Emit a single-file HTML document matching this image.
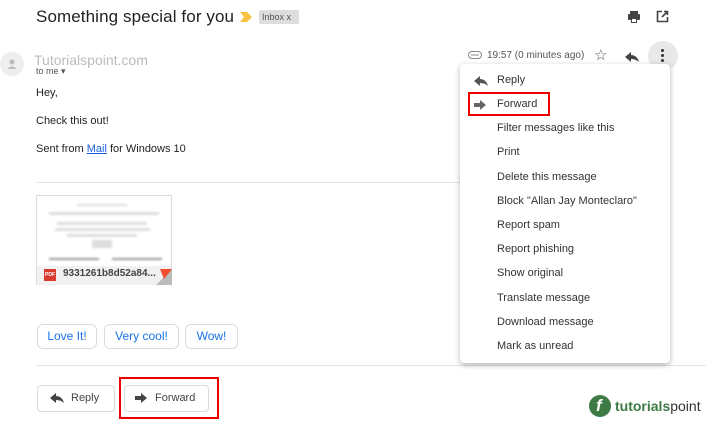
<!DOCTYPE html>
<html><head><style>
*{margin:0;padding:0;box-sizing:border-box}
body{width:720px;height:425px;background:#fff;font-family:"Liberation Sans",Arial,sans-serif;position:relative;overflow:hidden;color:#222}
.a{position:absolute}
.t{font-size:11px;color:#222}
.mi{position:absolute;left:497px;font-size:11px;color:#333}
.btn{position:absolute;border:1px solid #dadce0;border-radius:4px;background:#fff}
.qr{position:absolute;top:324px;height:25px;border:1px solid #dadce0;border-radius:6px;color:#1a73e8;font-size:12px;line-height:23px;text-align:center}
.blur{position:absolute;background:#ddd;filter:blur(1px);height:3px}
</style></head><body>
<div class="a" style="left:36px;top:7px;font-size:17px;color:#222;letter-spacing:0.1px">Something special for you</div>
<svg class="a" style="left:240px;top:12px" width="12" height="10"><path d="M0 0H7L12 5L7 10H0L4 5Z" fill="#f6c342"/></svg>
<div class="a" style="left:259px;top:10px;width:40px;height:14px;background:#ddd;border-radius:2px;font-size:9px;color:#555;line-height:14px;padding-left:3px">Inbox <span style="font-size:9px">x</span></div>
<svg class="a" style="left:627px;top:10px" width="14" height="14"><rect x="3" y="1" width="8" height="3" fill="#444"/><rect x="1" y="4" width="12" height="6" rx="1" fill="#444"/><rect x="4" y="8" width="6" height="5" fill="#444"/><rect x="5" y="9" width="4" height="3" fill="#fff"/></svg>
<svg class="a" style="left:656px;top:10px" width="13" height="13"><path d="M6 1.5H1.5V11.5H11.5V7M8 1.5H11.5V5M11.5 1.5L6 7" stroke="#444" stroke-width="1.6" fill="none"/></svg>
<div class="a" style="left:0;top:52px;width:24px;height:24px;border-radius:50%;background:#eee"></div>
<svg class="a" style="left:6px;top:58px" width="12" height="12"><circle cx="6" cy="4" r="2.5" fill="#bbb"/><path d="M1.5 11Q6 6 10.5 11Z" fill="#bbb"/></svg>
<div class="a" style="left:34px;top:52px;font-size:14px;color:#bbb">Tutorialspoint.com</div>
<div class="a" style="left:36px;top:66px;font-size:9px;color:#555">to me &#9662;</div>
<div class="a t" style="left:36px;top:87px">Hey,</div>
<div class="a t" style="left:36px;top:115px">Check this out!</div>
<div class="a t" style="left:36px;top:143px">Sent from <span style="color:#1a5fd8;text-decoration:underline">Mail</span> for Windows 10</div>
<div class="a" style="left:36px;top:182px;width:430px;height:1px;background:#e5e5e5"></div>
<div class="a" style="left:36px;top:195px;width:136px;height:90px;border:1px solid #ddd;background:#fff">
<div class="blur" style="left:40px;top:8px;width:50px;height:2px"></div>
<div class="blur" style="left:12px;top:16px;width:110px"></div>
<div class="blur" style="left:20px;top:26px;width:90px"></div>
<div class="blur" style="left:18px;top:32px;width:95px"></div>
<div class="blur" style="left:30px;top:38px;width:70px"></div>
<div class="blur" style="left:55px;top:44px;width:20px;height:8px"></div>
<div class="blur" style="left:12px;top:62px;width:50px;height:2px;background:#999"></div>
<div class="blur" style="left:75px;top:62px;width:50px;height:2px;background:#999"></div>
<div class="a" style="left:0;top:70px;width:134px;height:19px;background:#f1f1f1"></div>
<div class="a" style="left:7px;top:73px;width:12px;height:12px;background:#db3a2f;color:#fff;font-size:5px;line-height:12px;text-align:center;font-weight:bold">PDF</div>
<div class="a" style="left:26px;top:72px;font-size:10px;color:#444;font-weight:bold">9331261b8d52a84...</div>
<svg class="a" style="left:105px;top:73px" width="30" height="16"><path d="M30 0L30 16L14 16Z" fill="#bbb"/><path d="M18 0H30L22 10Z" fill="#f04e2f"/></svg>
</div>
<div class="qr" style="left:37px;width:60px">Love It!</div>
<div class="qr" style="left:104px;width:75px">Very cool!</div>
<div class="qr" style="left:185px;width:53px">Wow!</div>
<div class="a" style="left:36px;top:365px;width:670px;height:1px;background:#e5e5e5"></div>
<div class="btn" style="left:37px;top:385px;width:78px;height:27px"></div>
<svg class="a" style="left:50px;top:392px" width="14" height="12"><path d="M6 1L0 6L6 11V8Q11 8 14 11Q12 4 6 4Z" fill="#444"/></svg>
<div class="a" style="left:71px;top:392px;font-size:11px;color:#444">Reply</div>
<div class="btn" style="left:124px;top:385px;width:85px;height:27px"></div>
<svg class="a" style="left:135px;top:393px" width="12" height="10"><path d="M0 3H6V0L12 5L6 10V7H0Z" fill="#444"/></svg>
<div class="a" style="left:155px;top:392px;font-size:11px;color:#444">Forward</div>
<div class="a" style="left:119px;top:377px;width:100px;height:42px;border:2px solid #e00"></div>
<svg class="a" style="left:468px;top:51px" width="14" height="8"><rect x="0.5" y="0.5" width="13" height="7" rx="3.5" stroke="#888" fill="none"/><line x1="3" y1="4" x2="11" y2="4" stroke="#888"/></svg>
<div class="a" style="left:487px;top:50px;font-size:10px;color:#555">19:57 (0 minutes ago)</div>
<div class="a" style="left:594px;top:46px;font-size:15px;color:#555">☆</div>
<svg class="a" style="left:625px;top:51px" width="14" height="12"><path d="M6 1L0 6L6 11V8Q11 8 14 11Q12 4 6 4Z" fill="#444"/></svg>
<div class="a" style="left:648px;top:41px;width:30px;height:30px;border-radius:50%;background:#e8e8e8"></div>
<div class="a" style="left:661px;top:49px;width:3px;height:3px;background:#333;border-radius:50%;box-shadow:0 5px #333,0 10px #333"></div>
<div class="a" style="left:460px;top:64px;width:210px;height:299px;background:#fff;border-radius:4px;box-shadow:0 2px 6px rgba(0,0,0,.3)"></div>
<svg class="a" style="left:474px;top:75px" width="14" height="12"><path d="M6 1L0 6L6 11V8Q11 8 14 11Q12 4 6 4Z" fill="#555"/></svg>
<div class="mi" style="top:74px">Reply</div>
<svg class="a" style="left:474px;top:100px" width="12" height="10"><path d="M0 3H6V0L12 5L6 10V7H0Z" fill="#666"/></svg>
<div class="mi" style="top:98px">Forward</div>
<div class="a" style="left:468px;top:92px;width:82px;height:24px;border:2px solid #e00"></div>
<div class="mi" style="top:122px">Filter messages like this</div>
<div class="mi" style="top:146px">Print</div>
<div class="mi" style="top:171px">Delete this message</div>
<div class="mi" style="top:195px">Block "Allan Jay Monteclaro"</div>
<div class="mi" style="top:219px">Report spam</div>
<div class="mi" style="top:243px">Report phishing</div>
<div class="mi" style="top:267px">Show original</div>
<div class="mi" style="top:292px">Translate message</div>
<div class="mi" style="top:316px">Download message</div>
<div class="mi" style="top:340px">Mark as unread</div>
<div class="a" style="left:589px;top:395px;width:22px;height:22px;border-radius:50%;background:#3d7a45"></div>
<div class="a" style="left:596px;top:396px;font-size:17px;font-weight:bold;color:#fff;font-style:italic">f</div>
<div class="a" style="left:615px;top:398px;font-size:14px;color:#3d7a45"><b>tutorials</b><span style="color:#333">point</span></div>
</body></html>
